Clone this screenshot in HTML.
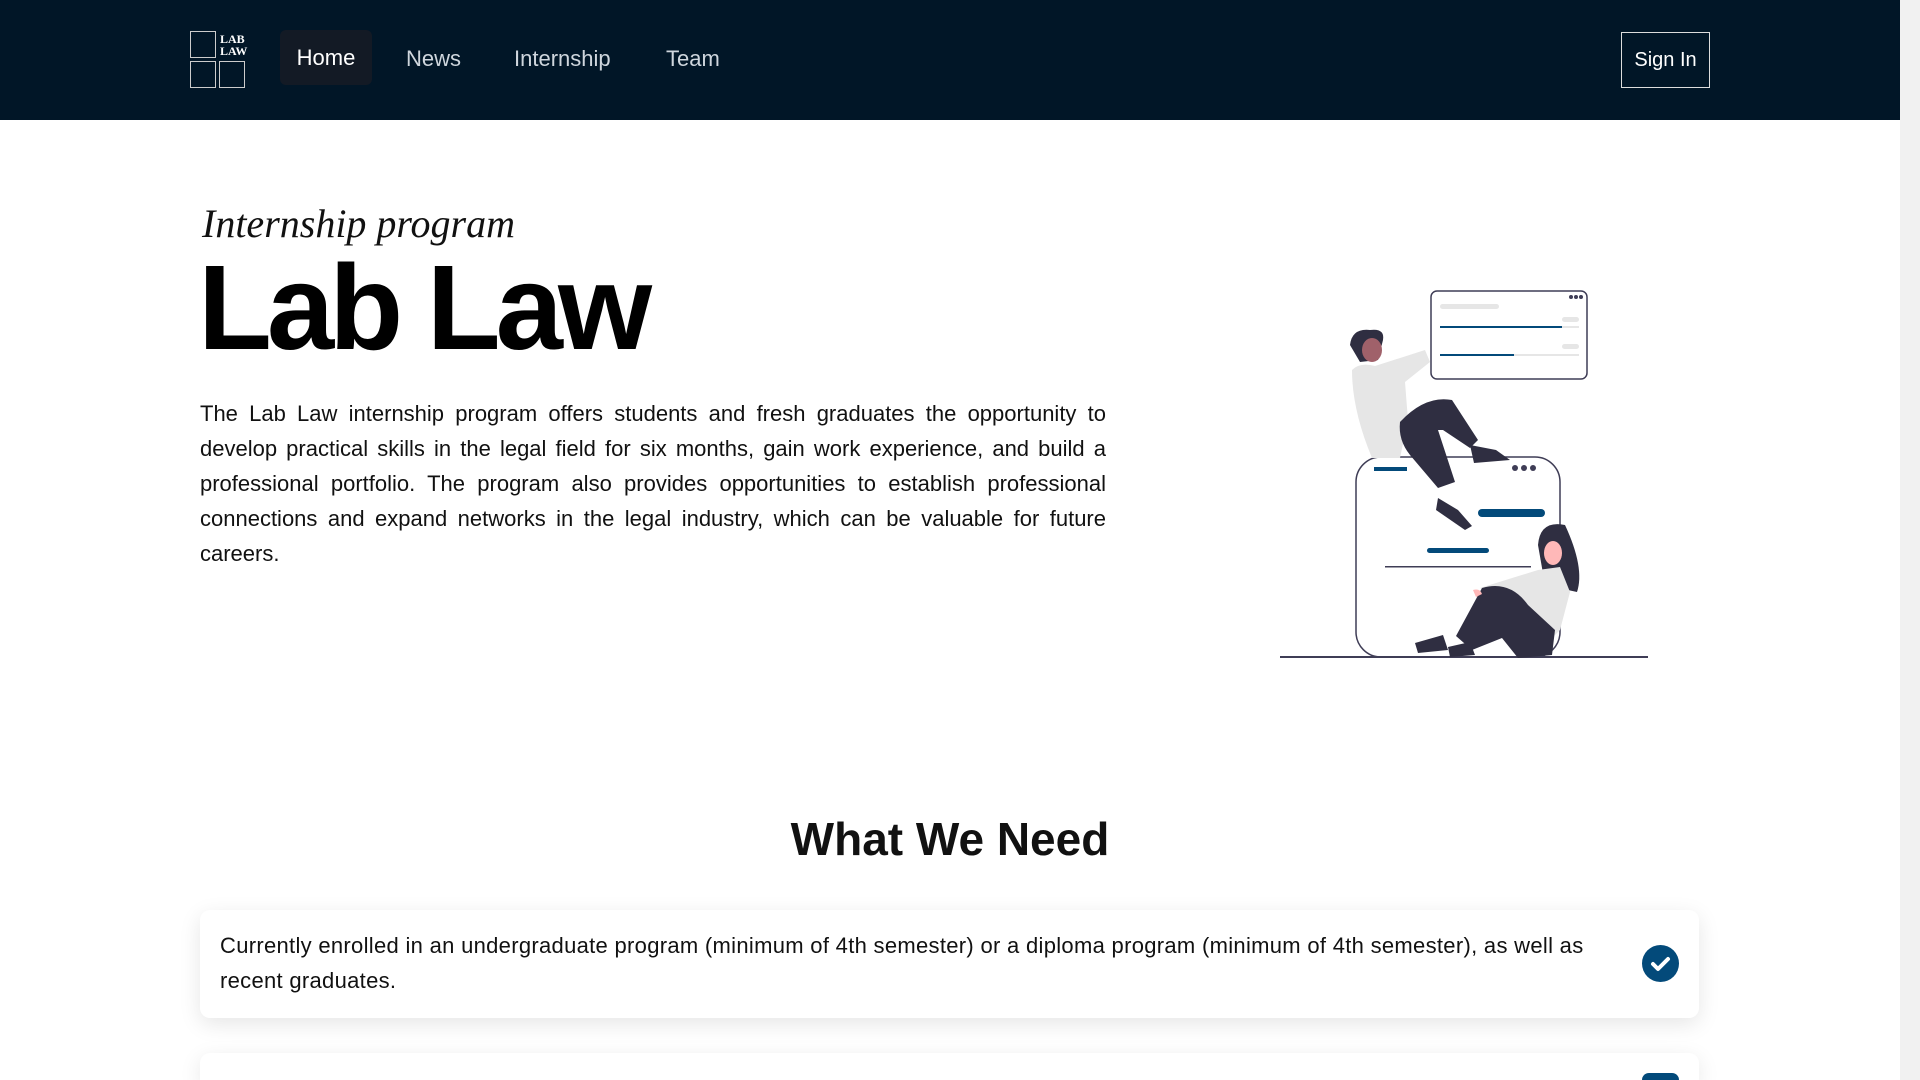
<!DOCTYPE html>
<html style="width:1920px;height:1080px;overflow:hidden"><head><style>
*{margin:0;padding:0;box-sizing:border-box}
body{width:1920px;height:1080px;overflow:hidden;background:#fff;font-family:"Liberation Sans",sans-serif;position:relative}
nav{position:absolute;left:0;top:0;width:1900px;height:120px;background:#011627}
.lg{position:absolute;border:1.5px solid #ccc}
.nl{position:absolute;top:46px;font-size:22px;color:#cfd6dd}
.home{position:absolute;left:280px;top:30px;width:92px;height:55px;background:#131a25;border-radius:6px;color:#fff;font-size:22px;text-align:center;line-height:55px}
.sign{position:absolute;left:1621px;top:32px;width:89px;height:56px;border:1px solid #ddd;color:#fff;font-size:20px;text-align:center;line-height:54px}
.sb{position:absolute;left:1900px;top:0;width:20px;height:1080px;background:#f1f1f1}
.th{position:absolute;left:1902px;top:17px;width:16px;height:235px;background:#c1c1c1}
p.t{position:absolute;left:200px;top:396px;width:906px;font-size:22px;line-height:35px;text-align:justify;color:#111}
.card{position:absolute;left:200px;width:1499px;background:#fff;border-radius:10px;box-shadow:0 6px 22px rgba(0,0,0,.10)}
.ck{position:absolute;left:1642px;width:37px;height:37px;border-radius:50%;background:#034a7a}
</style></head><body>
<nav>
<div class="lg" style="left:190px;top:31px;width:26px;height:27px"></div>
<div class="lg" style="left:190px;top:61px;width:26px;height:27px"></div>
<div class="lg" style="left:219px;top:61px;width:26px;height:27px"></div>
<div style="position:absolute;left:220px;top:33px;color:#fff;font:bold 12px 'Liberation Serif',serif;line-height:12px">LAB<br>LAW</div>
<div class="home">Home</div>
<div class="nl" style="left:406px">News</div>
<div class="nl" style="left:514px">Internship</div>
<div class="nl" style="left:666px">Team</div>
<div class="sign">Sign In</div>
</nav>
<div style="position:absolute;left:202px;top:200px;font:italic 40px 'Liberation Serif',serif;color:#111">Internship program</div>
<div style="position:absolute;left:198px;top:242px;font:bold 121px 'Liberation Sans',sans-serif;letter-spacing:-5px;color:#000;line-height:130px">Lab Law</div>
<p class="t">The Lab Law internship program offers students and fresh graduates the opportunity to develop practical skills in the legal field for six months, gain work experience, and build a professional portfolio. The program also provides opportunities to establish professional connections and expand networks in the legal industry, which can be valuable for future careers.</p>
<svg style="position:absolute;left:1260px;top:270px" width="400" height="400" viewBox="0 0 400 400">
<rect x="171" y="21" width="156" height="88" rx="6" fill="#fff" stroke="#3f3d56" stroke-width="1.5"/>
<circle cx="311" cy="27" r="2" fill="#3f3d56"/><circle cx="316" cy="27" r="2" fill="#3f3d56"/><circle cx="321" cy="27" r="2" fill="#3f3d56"/>
<rect x="180" y="34" width="59" height="5" rx="2.5" fill="#e6e6e6"/>
<rect x="302" y="47" width="17" height="5" rx="2.5" fill="#e6e6e6"/><rect x="302" y="74" width="17" height="5" rx="2.5" fill="#e6e6e6"/>
<rect x="180" y="56" width="139" height="2" fill="#e6e6e6"/><rect x="180" y="56" width="122" height="2" fill="#034a7a"/>
<rect x="180" y="84" width="139" height="2" fill="#e6e6e6"/><rect x="180" y="84" width="74" height="2" fill="#034a7a"/>
<rect x="96" y="187" width="204" height="200" rx="25" fill="#fff" stroke="#3f3d56" stroke-width="1.5"/>
<rect x="114" y="197" width="33" height="4" fill="#034a7a"/>
<circle cx="255" cy="198" r="3" fill="#3f3d56"/><circle cx="264" cy="198" r="3" fill="#3f3d56"/><circle cx="273" cy="198" r="3" fill="#3f3d56"/>
<rect x="218" y="239" width="67" height="8" rx="4" fill="#034a7a"/>
<rect x="167" y="278" width="62" height="5" rx="2.5" fill="#034a7a"/>
<rect x="125" y="296" width="146" height="1.5" fill="#3f3d56"/>
<line x1="20" y1="387" x2="388" y2="387" stroke="#3f3d56" stroke-width="2"/>
<path d="M90 75 Q92 58 110 60 Q125 58 123 70 L118 90 L100 92 Z" fill="#2f2e41"/>
<ellipse cx="112" cy="80" rx="10" ry="12" fill="#a0616a"/>
<path d="M92 100 Q100 92 115 96 L165 80 L170 92 L145 112 L148 150 L140 188 L112 188 Q92 140 92 100Z" fill="#e6e6e6"/>
<path d="M140 152 Q165 125 192 130 L218 170 L210 178 L183 160 L178 160 L195 212 L178 218 L150 185 Q138 170 140 152Z" fill="#2f2e41"/>
<path d="M210 175 L236 180 L250 190 L214 193Z" fill="#2f2e41"/>
<path d="M178 228 L198 240 L212 256 L205 260 L176 240Z" fill="#2f2e41"/>
<path d="M305 255 Q280 250 278 275 L285 315 L317 322 Q325 298 305 255Z" fill="#2f2e41"/>
<ellipse cx="293" cy="283" rx="9" ry="12" fill="#ffb8b8"/>
<path d="M278 300 L300 297 L310 322 L300 360 L275 385 L266 372 L280 352 L250 330 L220 318 Z" fill="#e6e6e6"/>
<path d="M222 318 Q250 310 268 335 L295 360 L292 385 L258 388 L242 368 L212 380 L196 366 Z" fill="#2f2e41"/>
<path d="M155 373 L183 365 L188 380 L158 383Z" fill="#2f2e41"/><path d="M188 377 L210 372 L215 385 L190 387Z" fill="#2f2e41"/>
<path d="M213 320 Q220 318 222 324 L216 327Z" fill="#ffb8b8"/>
</svg>
<div style="position:absolute;left:0;width:1900px;top:812px;text-align:center;font:bold 46px 'Liberation Sans',sans-serif;color:#111">What We Need</div>
<div class="card" style="top:910px;height:108px"><div style="position:absolute;left:20px;top:18px;width:1380px;font-size:22px;line-height:35px;color:#111;letter-spacing:0.3px">Currently enrolled in an undergraduate program (minimum of 4th semester) or a diploma program (minimum of 4th semester), as well as recent graduates.</div></div>
<div class="ck" style="top:945px"><svg width="37" height="37"><path d="M11 19 L16 24 L26 14" stroke="#fff" stroke-width="4" fill="none" stroke-linecap="round" stroke-linejoin="round"/></svg></div>
<div class="card" style="top:1053px;height:27px;border-radius:10px 10px 0 0"></div>
<div class="ck" style="top:1073px;height:7px;border-radius:18px 18px 0 0"></div>
<div class="sb"><div class="th"></div></div>
</body></html>
